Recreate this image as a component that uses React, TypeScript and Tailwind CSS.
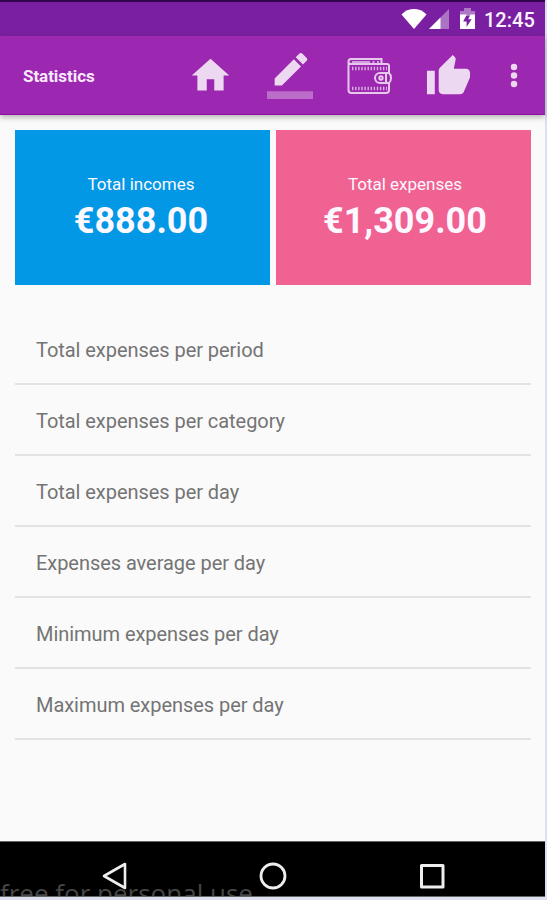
import React from 'react';

const rows = [
  'Total expenses per period',
  'Total expenses per category',
  'Total expenses per day',
  'Expenses average per day',
  'Minimum expenses per day',
  'Maximum expenses per day',
];

function StatusBar() {
  return (
    <div className="flex h-[36px] items-start border-t-2 border-[#32064d] bg-[#7b1fa2]">
      <svg className="ml-[400px] mt-[5px] h-[23px] w-[81px] shrink-0" viewBox="400 7 81 23" fill="#fff">
        <path d="M401.500 14.500C408.500 7.300 419.500 7.300 426.500 14.500L414 29z" />
        <path d="M449 9V29H429z" opacity=".38" />
        <path d="M440.500 17.500V29H429z" />
        <path d="M464 8h7v3h4v5h-15v-5h4z" opacity=".4" />
        <path fillRule="evenodd" d="M460 14.500h6.800l-3.600 7h3.400v5.500l5-7.700h-3.400l2.200-4.800H475V29h-15z" />
      </svg>
      <span className="ml-[3px] mt-[4px] text-[20px] font-medium leading-[28px] text-[#fbf3ff]">12:45</span>
    </div>
  );
}

function Wallet() {
  return (
    <svg className="shrink-0" width="46" height="39" viewBox="346 57 46 39" fill="none" stroke="#e6c8ec" strokeWidth="2">
      <path d="M348.500 62v28q0 3 3 3H386q3 0 3-3v-7M389 73v-7q0-2-2-2H351q-2.500 0-2.500-2.500T351 59h30.500v5" />
      <path d="M352 62h18m2.500 0h2m2.500 0h2" strokeWidth="1.600" />
      <path d="M352 68.500h35M352 88.500h35" strokeWidth="3.600" strokeDasharray="1.400 1.700" opacity=".85" />
      <path d="M386 73h-6a5 5 0 0 0 0 10h6M386 73h3q2 1.500 2 5t-2 5h-3z" />
      <circle cx="381" cy="78" r="1.700" />
    </svg>
  );
}

function Toolbar() {
  return (
    <div className="relative flex h-[79px] items-start border-b border-[#8c0fa6] bg-[#9c27b0] pt-[17px] text-[#edd8f1] shadow-[0_2px_6px_rgba(30,45,30,0.36)]">
      <h1 className="ml-[23px] mt-[11px] w-[165px] shrink-0 text-[17px] font-bold leading-[24px] tracking-[-0.050px] text-[#fae9fd]">Statistics</h1>
      <svg className="shrink-0" width="45" height="45" viewBox="0 0 24 24" fill="currentColor">
        <path d="M10 20v-6h4v6h5v-8h3L12 3 2 12h3v8z" />
      </svg>
      <svg className="ml-[34px] shrink-0" width="46" height="46" viewBox="0 0 24 24" fill="currentColor">
        <path d="M17.750 7L14 3.250l-10 10V17h3.750l10-10zm2.960-2.960c.390-.390.390-1.020 0-1.410L18.370.290c-.390-.390-1.020-.390-1.410 0L15 2.250 18.750 6l1.960-1.960z" />
        <path d="M0 20h24v4H0z" opacity=".4" />
      </svg>
      <div className="ml-[33px] mt-[4px] flex shrink-0"><Wallet /></div>
      <svg className="ml-[33px] shrink-0" width="47" height="47" viewBox="0 0 24 24" fill="currentColor">
        <path d="M1 21h4V9H1v12zm22-11c0-1.100-.900-2-2-2h-6.310l.950-4.570.030-.320c0-.410-.170-.790-.440-1.060L14.170 1 7.590 7.590C7.220 7.950 7 8.450 7 9v10c0 1.100.900 2 2 2h9c.830 0 1.540-.500 1.840-1.220l3.020-7.050c.090-.230.140-.470.140-.730v-2z" />
      </svg>
      <svg className="ml-[36px] mt-[9px] shrink-0" width="12" height="28" viewBox="0 0 12 28" fill="currentColor">
        <circle cx="6" cy="5" r="3.200" />
        <circle cx="6" cy="13.500" r="3.200" />
        <circle cx="6" cy="22" r="3.200" />
      </svg>
    </div>
  );
}

function NavBar() {
  return (
    <div className="relative h-[56px] shrink-0 overflow-hidden border-b border-t border-[#666] bg-black">
      <span className="absolute left-0 top-[34px] whitespace-nowrap font-['Open_Sans',sans-serif] text-[26px] leading-[34px] text-[#464646]">free for personal use</span>
      <div className="relative flex pt-[19px]">
        <svg className="ml-[101px]" width="28" height="30" viewBox="0 0 28 30" fill="none" stroke="#eee" strokeWidth="2.600" strokeLinejoin="round">
          <path d="M3 15L24 3V27z" />
        </svg>
        <svg className="ml-[129px]" width="30" height="30" viewBox="0 0 30 30" fill="none" stroke="#eee" strokeWidth="2.800">
          <circle cx="15" cy="15" r="12" />
        </svg>
        <svg className="ml-[129px]" width="30" height="30" viewBox="0 0 30 30" fill="none" stroke="#eee" strokeWidth="3" strokeLinejoin="round">
          <rect x="4.500" y="4.500" width="21.500" height="21.500" />
        </svg>
      </div>
    </div>
  );
}

function Card({ label, amount, tone }: { label: string; amount: string; tone: string }) {
  return (
    <div className={`flex h-[155px] w-[255px] shrink-0 flex-col items-center pt-[42px] text-[#fdf8ff] ${tone}`}>
      <span className="text-[17px] leading-[24px]">{label}</span>
      <span className="mt-[2px] text-[36px] font-bold leading-[46px]">{amount}</span>
    </div>
  );
}

export default function App() {
  return (
    <div className="h-[900px] w-[547px] overflow-hidden bg-[#dce1ef] pr-[2px] font-[Roboto,sans-serif]">
      <div className="flex h-[897px] flex-col bg-[#fafafa]">
        <StatusBar />
        <Toolbar />
        <main className="flex-1 pl-[15px] pt-[15px]">
          <div className="flex gap-[6px]">
            <Card label="Total incomes" amount="€888.00" tone="bg-[#0398e5] pr-[3px]" />
            <Card label="Total expenses" amount="€1,309.00" tone="bg-[#f06292] pl-[3px]" />
          </div>
          <ul className="mt-[29px] w-[516px]">
            {rows.map((row) => (
              <li key={row} className="flex h-[71px] items-center border-b-2 border-[#e3e3e3] pl-[21px] pt-[2px] text-[20px] tracking-[-0.050px] text-[#747474]">
                {row}
              </li>
            ))}
          </ul>
        </main>
        <NavBar />
      </div>
    </div>
  );
}
